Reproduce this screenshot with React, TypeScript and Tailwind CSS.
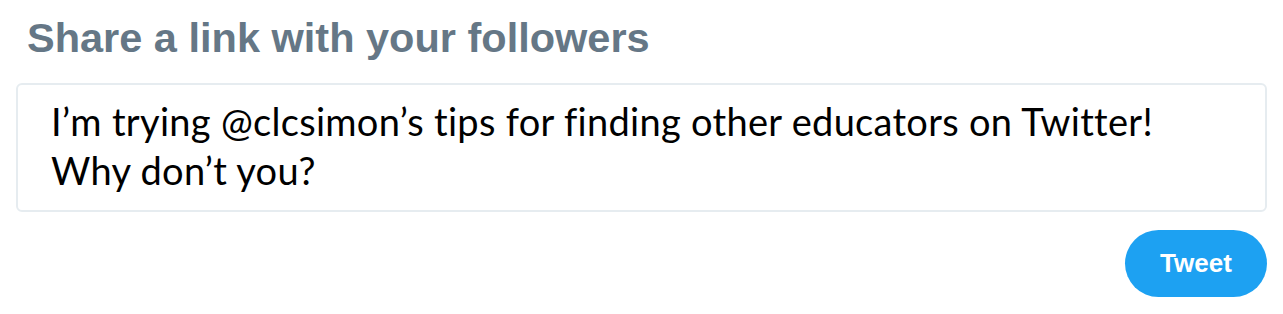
import React from 'react';

const App = () => {
  return (
    <div className="w-[1283px] h-[314px] bg-white px-4 pt-[14px]">
      <h1
        className="pl-[11px] text-[41.5px] leading-[48px] font-bold text-[#657786]"
        style={{ fontFamily: '"Liberation Sans", Arial, sans-serif' }}
      >
        Share a link with your followers
      </h1>

      <div className="mt-[21px] border-2 border-[#e6ecf0] rounded-[6px] pl-[33px] pt-[12px] pb-[15px]">
        <p
          className="text-[38px] leading-[49px] tracking-[0.3px] text-black"
          style={{ fontFamily: 'Lato, "Noto Sans", sans-serif' }}
        >
          I’m trying @clcsimon’s tips for finding other educators on Twitter!
          <br />
          Why don’t you?
        </p>
      </div>

      <div className="flex justify-end mt-[18px]">
        <button
          className="w-[142px] h-[67px] rounded-full bg-[#1da1f2] text-white text-[26px] font-bold flex items-center justify-center"
          style={{ fontFamily: '"Liberation Sans", Arial, sans-serif' }}
        >
          Tweet
        </button>
      </div>
    </div>
  );
};

export default App;
